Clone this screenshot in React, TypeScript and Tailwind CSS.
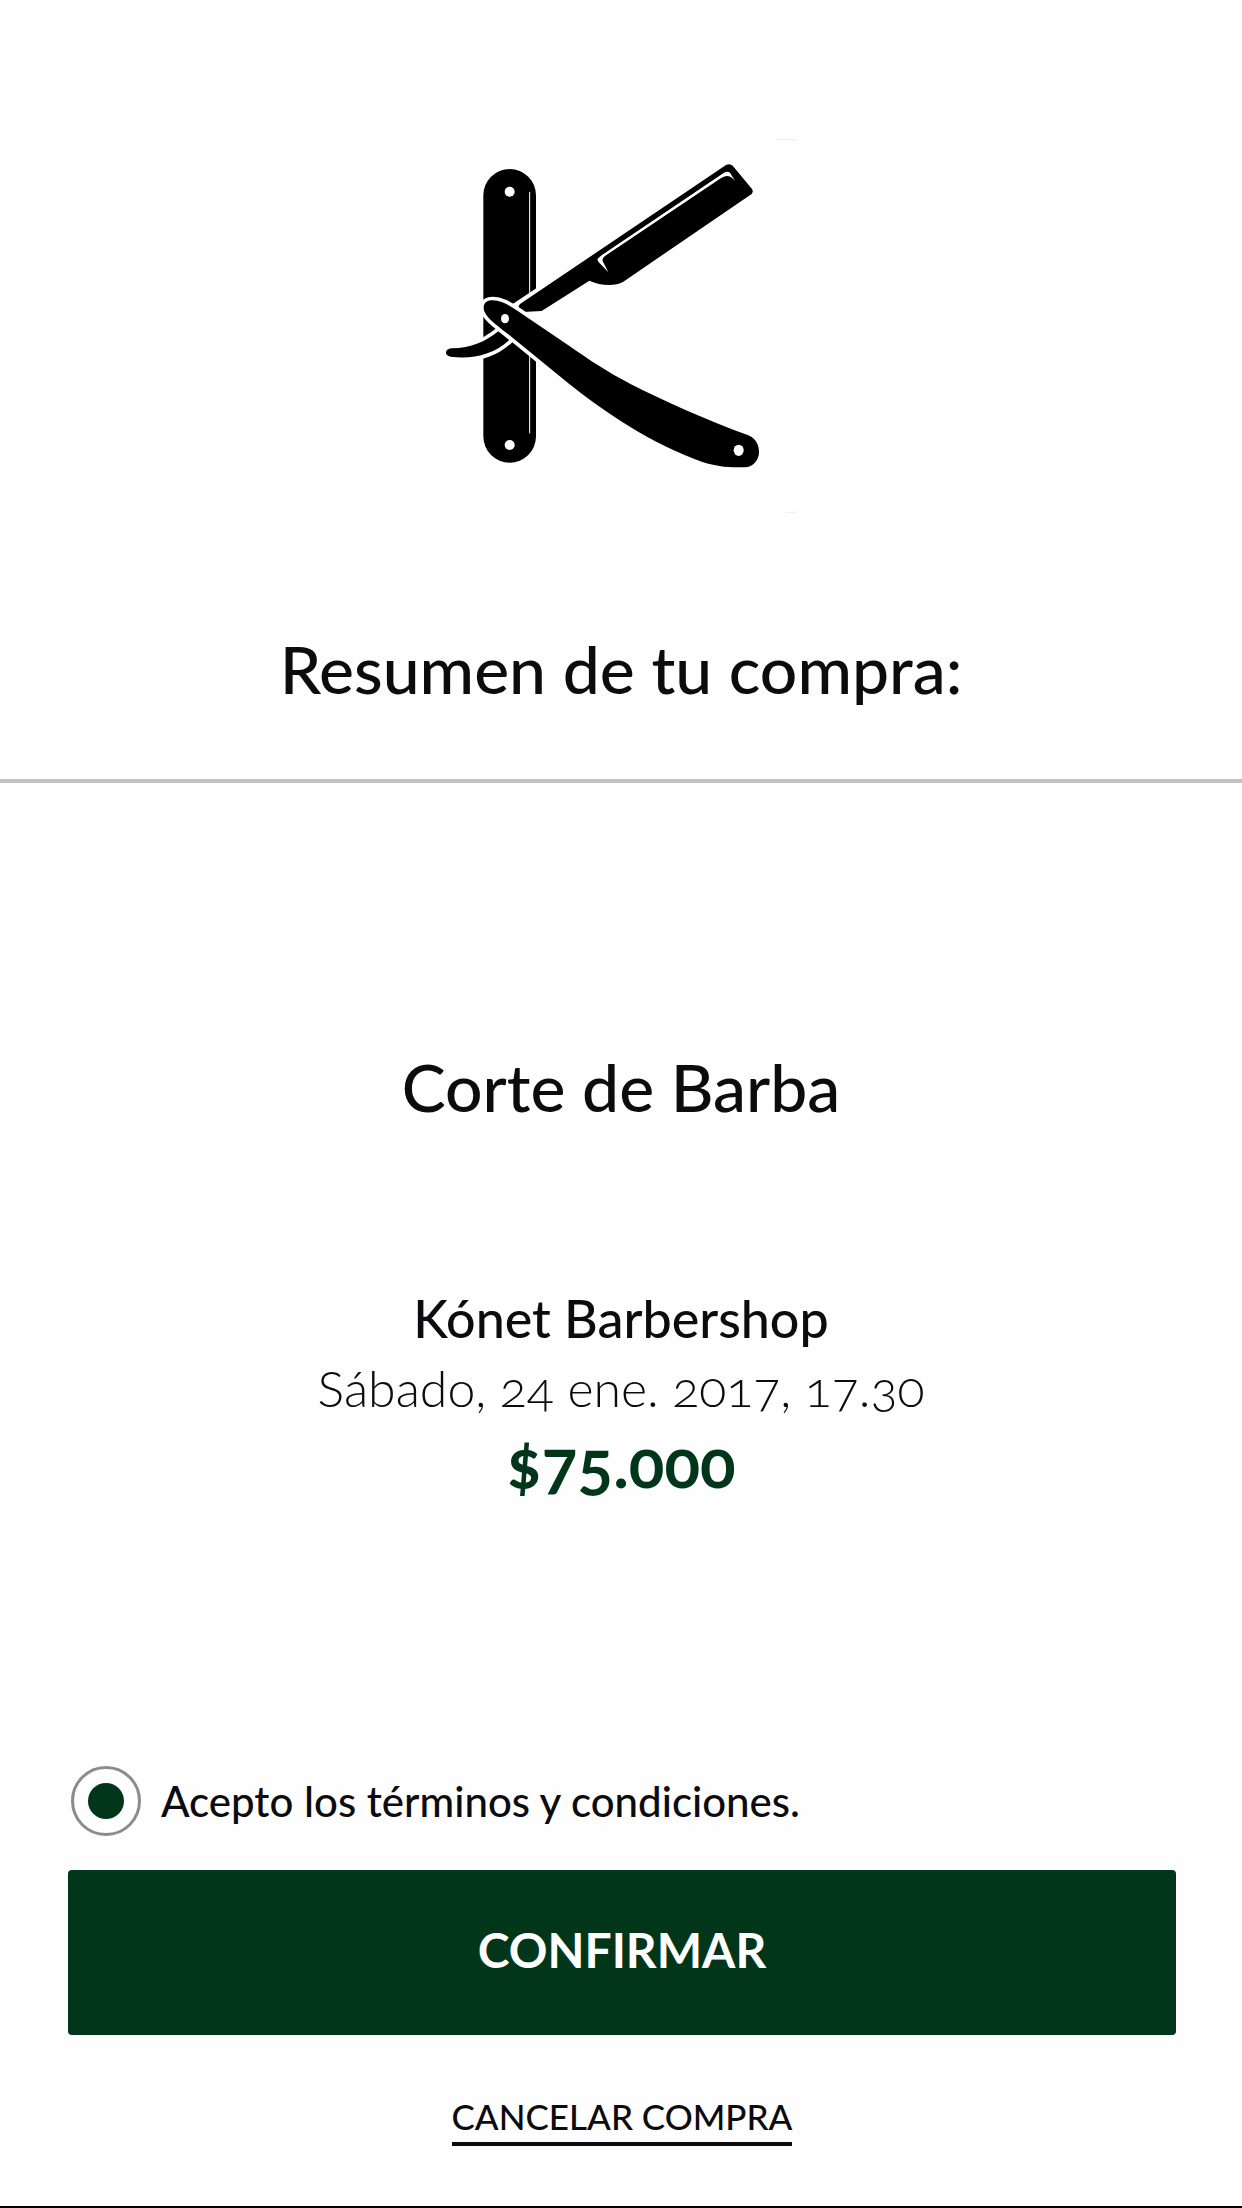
import { useState } from 'react';

function KonetLogo() {
  return (
    <svg viewBox="12 57 1122 1122" className="w-[374px] h-[374px]" role="img" aria-label="Kónet">
      {/* vertical handle */}
      <rect x="160" y="147" width="158" height="881" rx="79" fill="#000" />
      <circle cx="239" cy="215" r="15" fill="#fff" />
      <circle cx="239" cy="975" r="15" fill="#fff" />
      <path d="M299 216V940" stroke="#fff" strokeWidth="3" />

      {/* tail */}
      <path
        d="M205 634C165 665 125 685 65 685C42 687 43 708 62 710C125 718 190 705 238 660Z"
        fill="#000"
        stroke="#fefefe"
        strokeWidth="22"
        paintOrder="stroke"
      />

      {/* blade */}
      <path d="M247 553L320 504V620L262 580Z" fill="#fefefe" />
      <path
        d="M270 552L888 135Q899 129 908 137L966 207Q971 215 965 222L580 485C555 500 510 497 478 482L335 573L277 576Q258 566 270 552Z"
        fill="#000"
        stroke="#fefefe"
        strokeWidth="20"
        paintOrder="stroke"
      />
      <path
        d="M502 417L516 405L882 158Q892 153 900 158L916 184Q904 168 890 168Q882 168 870 176L526 407Q514 415 519 425L535 457L505 425Z"
        fill="#fff"
      />

      {/* lower handle */}
      <path
        d="M161 563C161 545 175 541 188 541C215 541 240 558 262 572L415 676C475 718 535 758 600 791C700 842 830 900 955 946C980 957 987 978 987 995C988 1018 970 1042 945 1042H910C870 1040 840 1033 815 1025C670 975 520 875 415 790L235 643C205 618 161 590 161 563Z"
        fill="#000"
        stroke="#fefefe"
        strokeWidth="22"
        paintOrder="stroke"
      />
      <ellipse cx="225" cy="596" rx="12" ry="14" fill="#fff" />
      <ellipse cx="926" cy="991" rx="15" ry="17" fill="#fff" />

      <path d="M1038 59H1103M1065 1177H1098" stroke="#ececec" strokeWidth="3" />
    </svg>
  );
}

export default function App() {
  const [accepted, setAccepted] = useState(true);

  return (
    <div className="min-h-screen flex flex-col bg-[#fefefe] text-[#0c0c10] font-['Lato',sans-serif] border-b-2 border-black">
      <header className="flex flex-col items-center pt-[139px] pb-[70px] border-b-4 border-[#c1c3c2]">
        <KonetLogo />
        <h1 className="mt-[116px] text-[66px] leading-[80px] font-medium text-center">Resumen de tu compra:</h1>
      </header>

      <main className="flex-1 flex flex-col items-center pt-[264px] text-center">
        <h2 className="text-[66px] leading-[80px] font-medium">Corte de Barba</h2>
        <p className="mt-[156px] text-[52px] leading-[70px] font-medium">Kónet Barbershop</p>
        <p className="text-[50px] leading-[70px] font-light oldstyle-nums">Sábado, 24 ene. 2017, 17.30</p>
        <p className="text-[66px] leading-[80px] font-bold oldstyle-nums text-[#02361b]">$75.000</p>
      </main>

      <footer className="flex flex-col items-center pl-[68px] pr-[66px] pb-[60px]">
        <label className="self-stretch flex items-center gap-5 pl-[3px] text-[42px] leading-[70px] font-medium">
          <input
            type="radio"
            checked={accepted}
            onChange={() => setAccepted(true)}
            className="appearance-none shrink-0 size-[70px] rounded-full border-3 border-[#8b8b92] p-[14px] bg-clip-content checked:bg-[#02361b]"
          />
          Acepto los términos y condiciones.
        </label>
        <button
          type="button"
          className="mt-[34px] w-full h-[165px] pb-1.5 rounded-sm bg-[#02361b] text-white text-[48px] font-bold"
        >
          CONFIRMAR
        </button>
        <a href="#" className="mt-[57px] pb-0.5 border-b-4 border-[#0c0c10] text-[35px] leading-[48px] font-medium">
          CANCELAR COMPRA
        </a>
      </footer>
    </div>
  );
}
